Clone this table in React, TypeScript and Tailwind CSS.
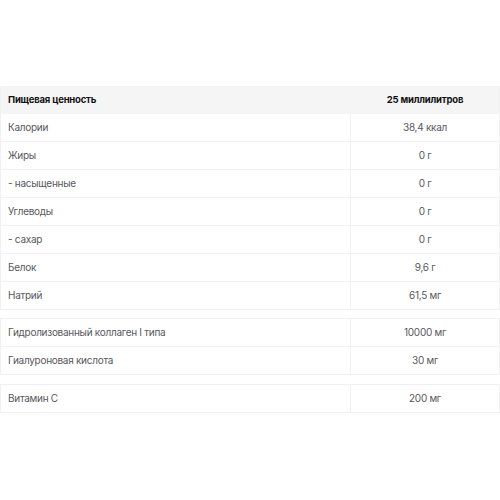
const MAIN = [
  ["Калории", "38,4 ккал"],
  ["Жиры", "0 г"],
  ["- насыщенные", "0 г"],
  ["Углеводы", "0 г"],
  ["- сахар", "0 г"],
  ["Белок", "9,6 г"],
  ["Натрий", "61,5 мг"],
];

const EXTRA = [
  ["Гидролизованный коллаген I типа", "10000 мг"],
  ["Гиалуроновая кислота", "30 мг"],
];

const VITAMINS = [["Витамин С", "200 мг"]];

function Row({ label, value }: { label: string; value: string }) {
  return (
    <div className="flex h-[28px] border-b border-[#f1f1f2] text-[10px] tracking-[-0.28px] text-[#58585c]">
      <div className="flex w-[350px] items-center border-r border-[#f1f1f2] pl-[7px]">{label}</div>
      <div className="flex flex-1 items-center justify-center">{value}</div>
    </div>
  );
}

function Table({ rows, header }: { rows: string[][]; header?: boolean }) {
  return (
    <div className={header ? "border-x border-[#f1f1f2]" : "border-x border-t border-[#f1f1f2]"}>
      {header && (
        <div className="flex h-[28px] items-center bg-[#f5f5f6] text-[9.5px] font-bold tracking-[-0.2px] text-[#111]">
          <div className="w-[350px] pl-[7px]">Пищевая ценность</div>
          <div className="flex-1 text-center">25 миллилитров</div>
        </div>
      )}
      {rows.map(([l, v]) => (
        <Row key={l} label={l} value={v} />
      ))}
    </div>
  );
}

export default function App() {
  return (
    <div className="h-[500px] w-[500px] bg-white pt-[86px]" style={{ fontFamily: "Inter, 'Noto Sans', sans-serif" }}>
      <Table rows={MAIN} header />
      <div className="mt-[8px]">
        <Table rows={EXTRA} />
      </div>
      <div className="mt-[9px]">
        <Table rows={VITAMINS} />
      </div>
    </div>
  );
}
